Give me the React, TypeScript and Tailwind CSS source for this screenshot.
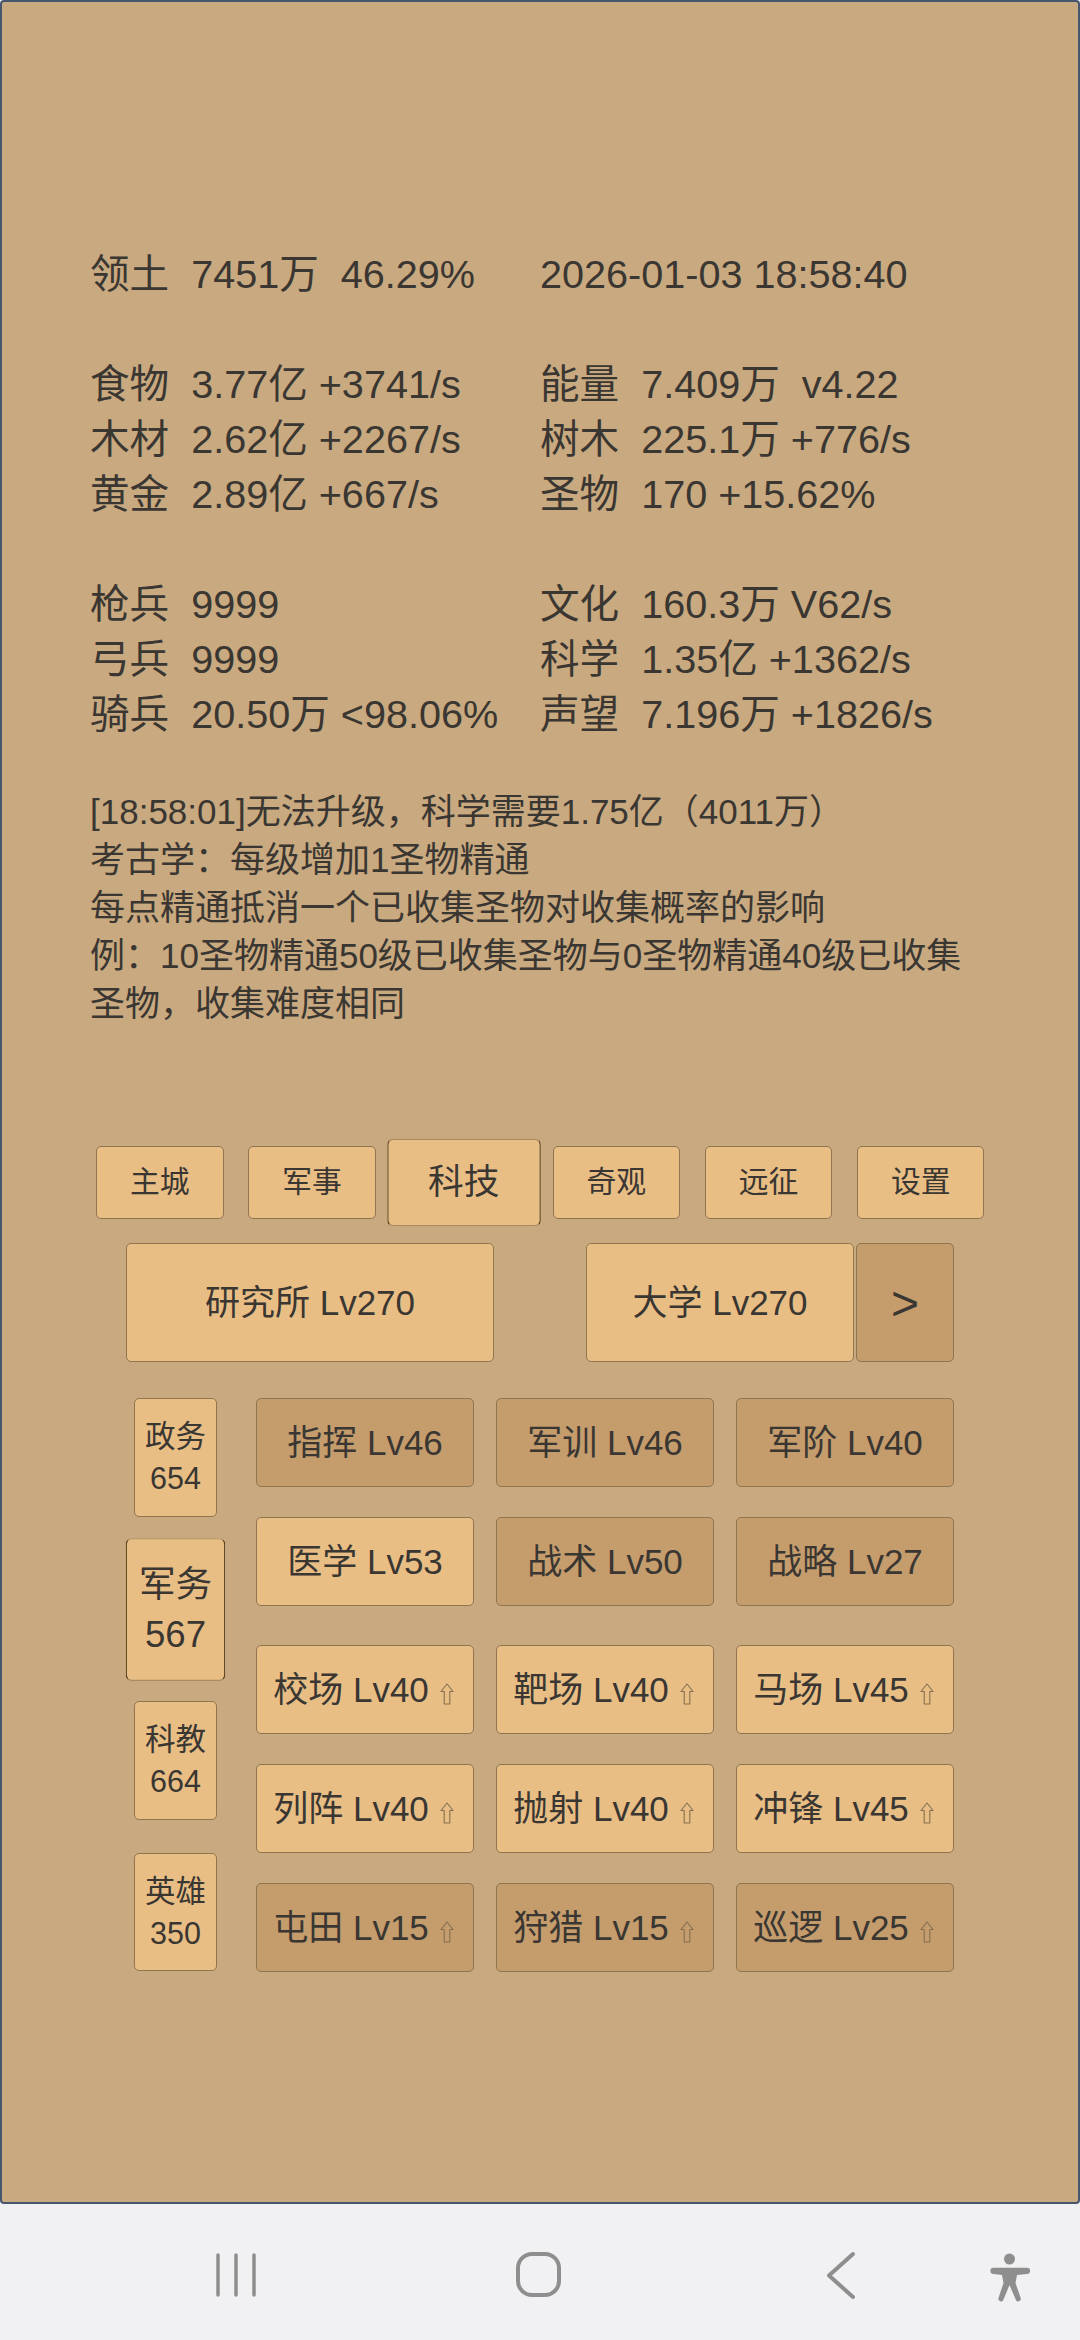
import React from "react";

const FONT = "font-['Liberation_Sans','Noto_Sans_CJK_SC',sans-serif]";
const LIGHT = "bg-[#e9be85]";
const DARK = "bg-[#c59c6c]";
const BTN = "flex items-center justify-center rounded-[5px] border border-[#8f7650]";
const ACTIVE = "scale-120 border-x-[#54401f] border-y-[#a58c60]";

const STATS: [string, string][][] = [
  [["领土  7451万  46.29%", "2026-01-03 18:58:40"]],
  [
    ["食物  3.77亿 +3741/s", "能量  7.409万  v4.22"],
    ["木材  2.62亿 +2267/s", "树木  225.1万 +776/s"],
    ["黄金  2.89亿 +667/s", "圣物  170 +15.62%"],
  ],
  [
    ["枪兵  9999", "文化  160.3万 V62/s"],
    ["弓兵  9999", "科学  1.35亿 +1362/s"],
    ["骑兵  20.50万 <98.06%", "声望  7.196万 +1826/s"],
  ],
];

const TABS = ["主城", "军事", "科技", "奇观", "远征", "设置"];

const SIDE = [
  { name: "政务", pts: 654 },
  { name: "军务", pts: 567, active: true },
  { name: "科教", pts: 664 },
  { name: "英雄", pts: 350 },
];

interface Tech {
  name: string;
  lv: number;
  dark?: boolean;
  up?: boolean;
}

const TECH_TOP: Tech[] = [
  { name: "指挥", lv: 46, dark: true },
  { name: "军训", lv: 46, dark: true },
  { name: "军阶", lv: 40, dark: true },
  { name: "医学", lv: 53 },
  { name: "战术", lv: 50, dark: true },
  { name: "战略", lv: 27, dark: true },
];

const TECH_BOTTOM: Tech[] = [
  { name: "校场", lv: 40, up: true },
  { name: "靶场", lv: 40, up: true },
  { name: "马场", lv: 45, up: true },
  { name: "列阵", lv: 40, up: true },
  { name: "抛射", lv: 40, up: true },
  { name: "冲锋", lv: 45, up: true },
  { name: "屯田", lv: 15, dark: true, up: true },
  { name: "狩猎", lv: 15, dark: true, up: true },
  { name: "巡逻", lv: 25, dark: true, up: true },
];

function UpArrow() {
  return (
    <svg className="ml-[11px] mr-[3px] mt-[6px]" width="14" height="22" viewBox="0 0 14 22" fill="none" stroke="#857050" strokeWidth="1.1">
      <path d="M7 1L13 8.500H9.800V21H4.200V8.500H1z" strokeLinejoin="round" />
    </svg>
  );
}

function TechGrid({ items }: { items: Tech[] }) {
  return (
    <div className="grid grid-cols-[218px_218px_218px] gap-x-[22px] gap-y-[30px]">
      {items.map((t) => (
        <div key={t.name} className={`${BTN} ${t.dark ? DARK : LIGHT} h-[89px] whitespace-pre pt-[2px] text-[35px]`}>
          {t.name} Lv{t.lv}
          {t.up && <UpArrow />}
        </div>
      ))}
    </div>
  );
}

function NavBar() {
  return (
    <div className="flex h-[136px] items-start text-[#8e8e8e]">
      <svg width="1080" height="136" viewBox="0 2204 1080 136" fill="none" stroke="currentColor">
        {/* recents */}
        <path d="M218 2255v40M236 2255v40M254 2255v40" strokeWidth="3.5" strokeLinecap="round" />
        {/* home */}
        <rect x="518" y="2254" width="41" height="41" rx="14" strokeWidth="4" />
        {/* back */}
        <path d="M853 2254l-24 21.500 24 21.500" strokeWidth="4" strokeLinecap="round" strokeLinejoin="round" />
        {/* accessibility */}
        <g fill="currentColor" stroke="none">
          <circle cx="1009.500" cy="2259" r="5.500" />
          <path d="M993.500 2267.700H1027a3.150 3.150 0 0 1 0 6.300L1017 2275L1015.500 2283L1020.700 2298a2.600 2.600 0 0 1-5 1.500L1009.500 2285L1003.500 2299.500a2.600 2.600 0 0 1-5-1.500L1003.500 2283L1002 2275L993.500 2274a3.150 3.150 0 0 1 0-6.300z" />
        </g>
      </svg>
    </div>
  );
}

export default function App() {
  return (
    <div className={`${FONT} flex h-[2340px] w-[1080px] flex-col overflow-hidden bg-[#f1f1f4] text-[#3a3632]`}>
      <div className="h-[2204px] rounded-[4px] border-2 border-[#46566e] bg-[#c9a97f] pt-[245px]">
        {/* stats */}
        <div className="pl-[88px] text-[39.6px] leading-[55px]">
          <div className="flex flex-col gap-[55px]">
            {STATS.map((group, i) => (
              <div key={i}>
                {group.map(([left, right]) => (
                  <div key={left} className="grid grid-cols-[450px_1fr] whitespace-pre">
                    <span>{left}</span>
                    <span>{right}</span>
                  </div>
                ))}
              </div>
            ))}
          </div>
        </div>

        {/* log */}
        <div className="mt-[46px] w-[990px] pl-[88px] text-[35px] leading-[48px]">
          <p>[18:58:01]无法升级，科学需要1.75亿（4011万）</p>
          <p>考古学：每级增加1圣物精通</p>
          <p>每点精通抵消一个已收集圣物对收集概率的影响</p>
          <p>例：10圣物精通50级已收集圣物与0圣物精通40级已收集圣物，收集难度相同</p>
        </div>

        {/* tabs */}
        <div className="mt-[118px] flex gap-[24.7px] pl-[94px]">
          {TABS.map((tab) => (
            <div
              key={tab}
              className={`${BTN} ${LIGHT} h-[73px] w-[127.5px] text-[29.8px] ${tab === "科技" ? ACTIVE : ""}`}
            >
              {tab}
            </div>
          ))}
        </div>

        {/* buildings */}
        <div className="mt-[24px] flex h-[119px] pl-[124px] pt-0 text-[35px]">
          <div className={`${BTN} ${LIGHT} w-[368px] pt-[2px]`}>研究所 Lv270</div>
          <div className={`${BTN} ${LIGHT} ml-[92px] w-[268px] pt-[2px]`}>大学 Lv270</div>
          <div className={`${BTN} ${DARK} ml-[2px] w-[98px] pt-[2px] text-[48px]`}>&gt;</div>
        </div>

        {/* tech tree */}
        <div className="mt-[36px] flex pl-[132px]">
          <div className="flex w-[83px] flex-col gap-[33px]">
            {SIDE.map((s) => (
              <div
                key={s.name}
                className={`${BTN} ${LIGHT} h-[118.5px] flex-col text-[30.5px] leading-[42px] ${s.active ? ACTIVE : ""}`}
              >
                <span>{s.name}</span>
                <span>{s.pts}</span>
              </div>
            ))}
          </div>
          <div className="ml-[39px] flex flex-col gap-[39px]">
            <TechGrid items={TECH_TOP} />
            <TechGrid items={TECH_BOTTOM} />
          </div>
        </div>
      </div>
      <NavBar />
    </div>
  );
}
